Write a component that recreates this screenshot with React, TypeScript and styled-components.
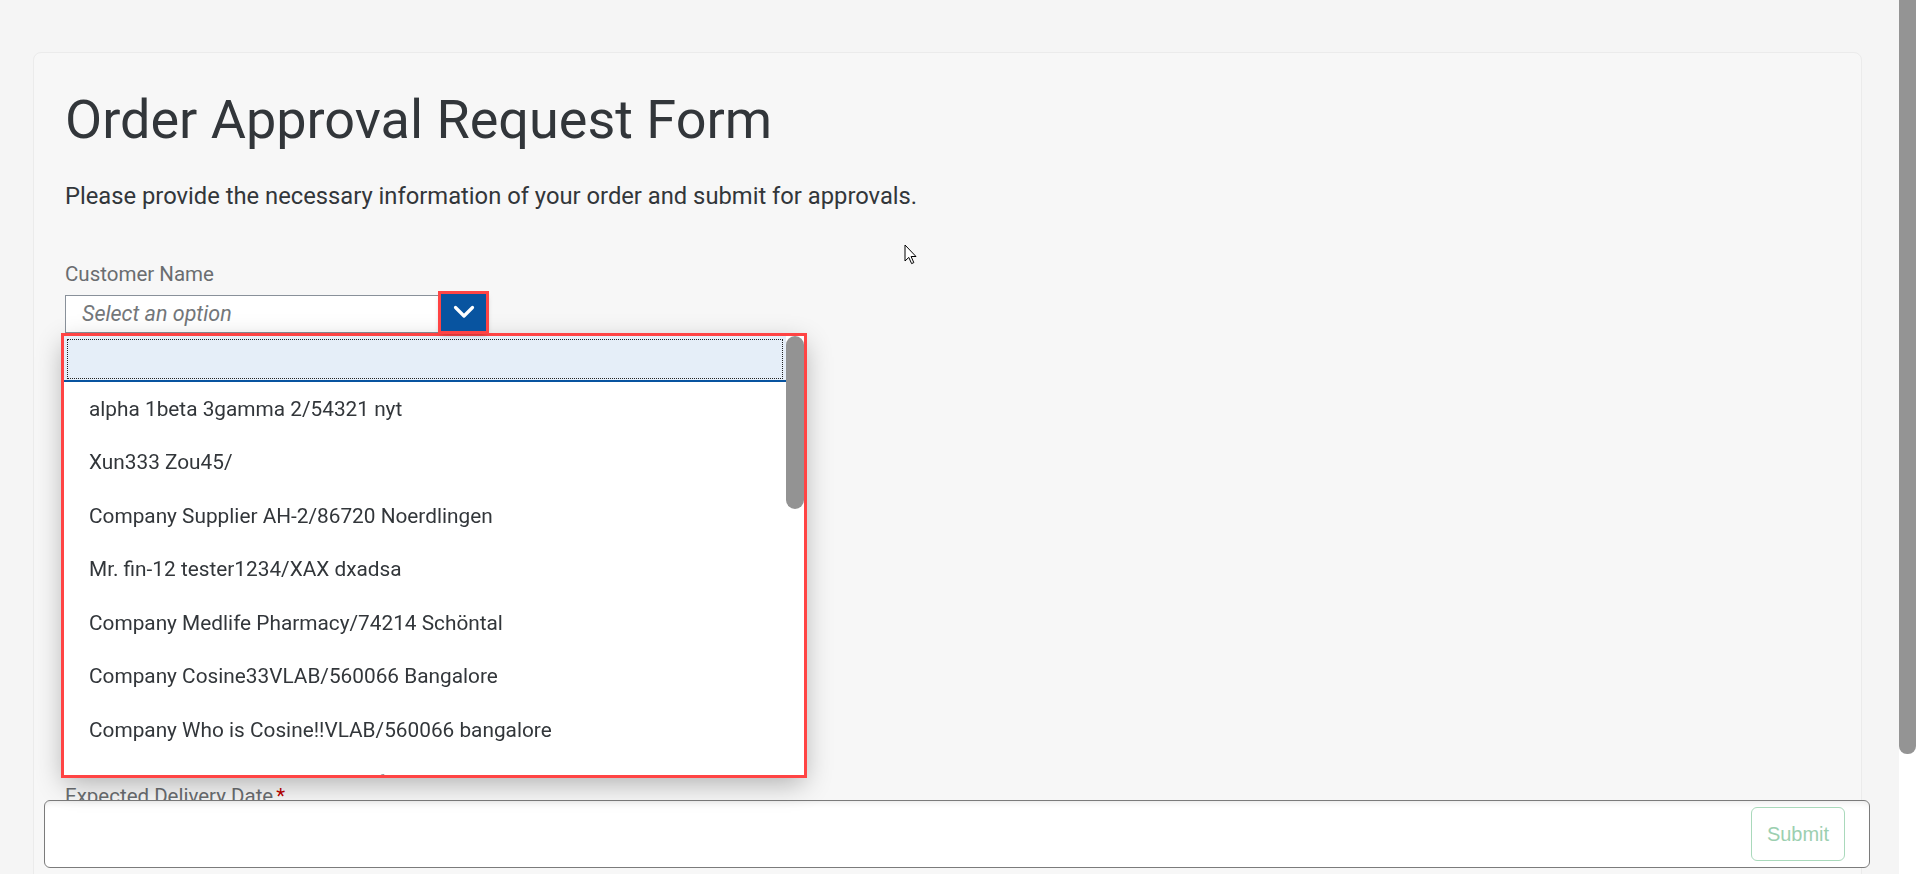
import { FC } from "react";
import styled, { createGlobalStyle } from "styled-components";

const GlobalStyle = createGlobalStyle`
  html, body {
    margin: 0;
    height: 100%;
    overflow: hidden;
    background: #f5f5f5;
    font-family: Roboto, "Liberation Sans", sans-serif;
    color: #32363a;
  }
`;

const customers = [
  "alpha 1beta 3gamma 2/54321 nyt",
  "Xun333 Zou45/",
  "Company Supplier AH-2/86720 Noerdlingen",
  "Mr. fin-12 tester1234/XAX dxadsa",
  "Company Medlife Pharmacy/74214 Schöntal",
  "Company Cosine33VLAB/560066 Bangalore",
  "Company Who is Cosine!!VLAB/560066 bangalore",
  "new customer 2/69190 walldorf",
];

const Shell = styled.div`
  display: flex;
  height: 100vh;
`;

const Main = styled.main`
  flex: 1;
  min-width: 0;
  padding: 52px 37px 0 33px;
  overflow: hidden;
`;

const Card = styled.section`
  position: relative;
  min-height: 1000px;
  padding: 35px 31px 0;
  background: #f7f7f7;
  border: 1px solid #ebebeb;
  border-radius: 8px;
`;

const Title = styled.h1`
  margin: 0;
  font-size: 54px;
  font-weight: 400;
  line-height: 1.2;
  color: #32363a;
`;

const Intro = styled.p`
  margin: 27px 0 0;
  font-size: 23.75px;
  line-height: 1.4;
`;

const Form = styled.div`
  display: flex;
  flex-direction: column;
  margin-top: 47px;
`;

// $offset: room left for the fields covered by the open list
const Field = styled.div<{ $offset?: number }>`
  display: flex;
  flex-direction: column;
  gap: 6px;
  margin-top: ${(p) => p.$offset ?? 0}px;
`;

const Label = styled.label`
  font-size: 20.5px;
  line-height: 1.4;
  color: #6a6d70;
`;

const Required = styled.span`
  color: #bb0000;
  margin-left: 3px;
`;

const Control = styled.div`
  position: relative;
  display: flex;
  align-items: flex-start;
  width: 421px;
`;

const Input = styled.div`
  box-sizing: border-box;
  width: 376px;
  height: 38px;
  padding: 0 16px;
  display: flex;
  align-items: center;
  background: #fff;
  border: 1px solid #89919a;
  font-size: 21.5px;
  font-style: italic;
  color: #74777a;
`;

const ToggleButton = styled.button<{ $marked?: boolean }>`
  position: relative;
  z-index: 30;
  width: 45px;
  height: 37px;
  margin-top: -1px;
  padding: 0;
  border: none;
  background: #0854a0;
  display: flex;
  align-items: center;
  justify-content: center;
  outline: ${(p) => (p.$marked ? "3px solid #f44" : "none")};
  box-shadow: ${(p) => (p.$marked ? "0 3px 6px rgba(0, 0, 0, 0.35)" : "none")};
`;

const Popover = styled.div`
  position: absolute;
  z-index: 20;
  top: 41px;
  left: -1px;
  width: 740px;
  height: 439px;
  display: flex;
  background: #fff;
  outline: 3px solid #f44;
  box-shadow: 0 8px 26px rgba(0, 0, 0, 0.3);
  overflow: hidden;
`;

const OptionList = styled.ul`
  flex: 1;
  margin: 0;
  padding: 0;
  list-style: none;
`;

const SearchRow = styled.li`
  height: 44px;
  background: #e5eef8;
  border-bottom: 2px solid #0854a0;
  outline: 1px dotted #222;
  outline-offset: -4px;
`;

const Option = styled.li`
  box-sizing: border-box;
  height: 53.5px;
  padding: 1px 0 0 25px;
  display: flex;
  align-items: center;
  font-size: 20.8px;
  color: #32363a;
  white-space: nowrap;
`;

const ListScroll = styled.div`
  width: 18px;
  background: #fff;
`;

const ListThumb = styled.div`
  height: 173px;
  background: #939393;
  border-radius: 9px;
`;

const Cursor = styled.svg`
  position: absolute;
  left: 870px;
  top: 191px;
`;

const ScrollRail = styled.div`
  width: 17px;
  background: #fff;
`;

const RailThumb = styled.div`
  height: 754px;
  background: #949494;
  border-radius: 0 0 8px 8px;
`;

const FooterBar = styled.footer`
  position: fixed;
  z-index: 10;
  left: 44px;
  bottom: 6px;
  box-sizing: border-box;
  width: 1826px;
  height: 68px;
  padding: 0 24px;
  display: flex;
  align-items: center;
  justify-content: flex-end;
  background: #fff;
  border: 1px solid #7b7b7b;
  border-radius: 6px;
  box-shadow: inset 0 6px 10px -8px rgba(0, 0, 0, 0.2);
`;

const SubmitButton = styled.button`
  width: 94px;
  height: 54px;
  background: #fff;
  border: 1px solid #a9d9bb;
  border-radius: 6px;
  font-family: "Liberation Sans", Arial, sans-serif;
  font-size: 20px;
  color: #9ccfb0;
`;

const Chevron: FC = () => (
  <svg width="22" height="14" viewBox="0 0 22 14">
    <path d="M2.5 2.5 L11 11 L19.5 2.5" fill="none" stroke="#fff" strokeWidth="3.2" strokeLinecap="round" strokeLinejoin="round" />
  </svg>
);

const App: FC = () => {
  return (
    <>
      <GlobalStyle />
      <Shell>
        <Main>
          <Card>
            <Title>Order Approval Request Form</Title>
            <Intro>Please provide the necessary information of your order and submit for approvals.</Intro>

            <Form>
              <Field>
                <Label>Customer Name</Label>
                <Control>
                  <Input>Select an option</Input>
                  <ToggleButton $marked aria-label="Open">
                    <Chevron />
                  </ToggleButton>
                  <Popover>
                    <OptionList>
                      <SearchRow />
                      {customers.map((name) => (
                        <Option key={name}>{name}</Option>
                      ))}
                    </OptionList>
                    <ListScroll>
                      <ListThumb />
                    </ListScroll>
                  </Popover>
                </Control>
              </Field>

              <Field $offset={449}>
                <Label>
                  Expected Delivery Date<Required>*</Required>
                </Label>
                <Control>
                  <Input />
                </Control>
              </Field>
            </Form>

            <Cursor width="13" height="21" viewBox="0 0 13 21">
              <path d="M1 1 L1 17 L4.8 13.4 L7.6 19.6 L9.8 18.6 L7.1 12.5 L12 12.5 Z" fill="#fff" stroke="#000" strokeWidth="1" strokeLinejoin="round" />
            </Cursor>
          </Card>
        </Main>
        <ScrollRail>
          <RailThumb />
        </ScrollRail>
      </Shell>

      <FooterBar>
        <SubmitButton>Submit</SubmitButton>
      </FooterBar>
    </>
  );
};

export default App;
